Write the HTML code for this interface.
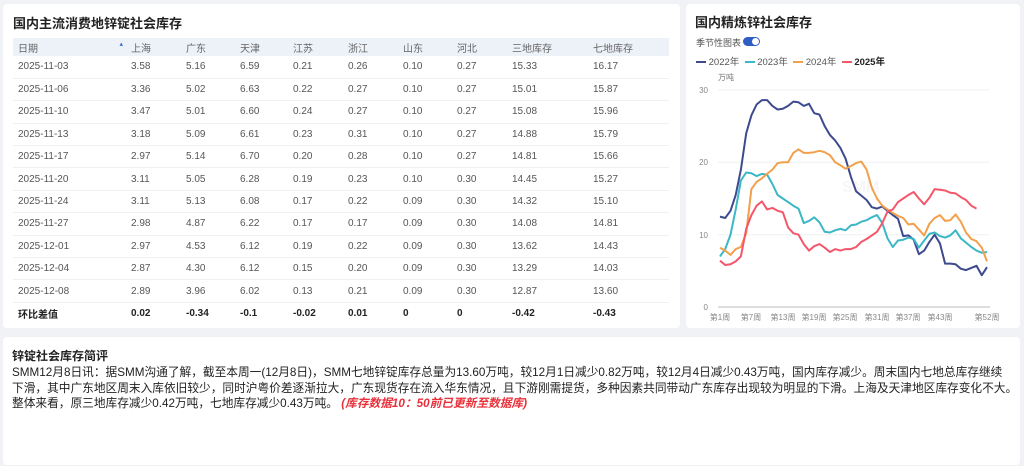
<!DOCTYPE html>
<html><head><meta charset="utf-8">
<style>
*{margin:0;padding:0;box-sizing:border-box}
body{width:1024px;height:466px;background:#f0f2f6;font-family:"Liberation Sans","Noto Sans CJK SC",sans-serif;color:#333;position:relative;overflow:hidden}
.card{position:absolute;background:#fff;border-radius:4px}
h3{font-size:13px;font-weight:bold;color:#222;position:absolute}
table{position:absolute;left:10px;top:34px;width:656px;border-collapse:collapse;font-size:10px;color:#555;table-layout:fixed}
td{height:22.4px;border-bottom:1px solid #eef0f3;padding:0;white-space:nowrap}
tr.hd td{background:#edf1f8;height:18px;border:none;color:#666}
tr.df td{font-weight:bold;color:#222;border:none}
.r{color:#e0102a}.g{color:#1a8a2a}
.txt{position:absolute;left:12px;top:365px;font-size:11.7px;line-height:15.5px;color:#222;white-space:nowrap}
</style></head><body>
<div class="card" style="left:3px;top:4px;width:677px;height:324px">
<h3 style="left:10px;top:9px">国内主流消费地锌锭社会库存</h3>
<table>
<colgroup><col style="width:118px"><col style="width:55px"><col style="width:54px"><col style="width:53px"><col style="width:55px"><col style="width:55px"><col style="width:54px"><col style="width:55px"><col style="width:81px"><col></colgroup>
<tr class="hd"><td style="padding-left:5px">日期<span style="float:right;color:#3a6fd8;font-size:7px;margin-right:8px">▴</span></td><td>上海</td><td>广东</td><td>天津</td><td>江苏</td><td>浙江</td><td>山东</td><td>河北</td><td>三地库存</td><td>七地库存</td></tr>
<tr><td style="padding-left:5px">2025-11-03</td><td>3.58</td><td>5.16</td><td>6.59</td><td>0.21</td><td>0.26</td><td>0.10</td><td>0.27</td><td>15.33</td><td>16.17</td></tr>
<tr><td style="padding-left:5px">2025-11-06</td><td>3.36</td><td>5.02</td><td>6.63</td><td>0.22</td><td>0.27</td><td>0.10</td><td>0.27</td><td>15.01</td><td>15.87</td></tr>
<tr><td style="padding-left:5px">2025-11-10</td><td>3.47</td><td>5.01</td><td>6.60</td><td>0.24</td><td>0.27</td><td>0.10</td><td>0.27</td><td>15.08</td><td>15.96</td></tr>
<tr><td style="padding-left:5px">2025-11-13</td><td>3.18</td><td>5.09</td><td>6.61</td><td>0.23</td><td>0.31</td><td>0.10</td><td>0.27</td><td>14.88</td><td>15.79</td></tr>
<tr><td style="padding-left:5px">2025-11-17</td><td>2.97</td><td>5.14</td><td>6.70</td><td>0.20</td><td>0.28</td><td>0.10</td><td>0.27</td><td>14.81</td><td>15.66</td></tr>
<tr><td style="padding-left:5px">2025-11-20</td><td>3.11</td><td>5.05</td><td>6.28</td><td>0.19</td><td>0.23</td><td>0.10</td><td>0.30</td><td>14.45</td><td>15.27</td></tr>
<tr><td style="padding-left:5px">2025-11-24</td><td>3.11</td><td>5.13</td><td>6.08</td><td>0.17</td><td>0.22</td><td>0.09</td><td>0.30</td><td>14.32</td><td>15.10</td></tr>
<tr><td style="padding-left:5px">2025-11-27</td><td>2.98</td><td>4.87</td><td>6.22</td><td>0.17</td><td>0.17</td><td>0.09</td><td>0.30</td><td>14.08</td><td>14.81</td></tr>
<tr><td style="padding-left:5px">2025-12-01</td><td>2.97</td><td>4.53</td><td>6.12</td><td>0.19</td><td>0.22</td><td>0.09</td><td>0.30</td><td>13.62</td><td>14.43</td></tr>
<tr><td style="padding-left:5px">2025-12-04</td><td>2.87</td><td>4.30</td><td>6.12</td><td>0.15</td><td>0.20</td><td>0.09</td><td>0.30</td><td>13.29</td><td>14.03</td></tr>
<tr><td style="padding-left:5px">2025-12-08</td><td>2.89</td><td>3.96</td><td>6.02</td><td>0.13</td><td>0.21</td><td>0.09</td><td>0.30</td><td>12.87</td><td>13.60</td></tr>
<tr class="df"><td style="padding-left:5px">环比差值</td><td class="r">0.02</td><td class="g">-0.34</td><td class="g">-0.1</td><td class="g">-0.02</td><td class="r">0.01</td><td>0</td><td>0</td><td class="g">-0.42</td><td class="g">-0.43</td></tr>
</table>
</div>
<div class="card" style="left:686px;top:4px;width:334px;height:324px">
<h3 style="left:9px;top:8px">国内精炼锌社会库存</h3>
<div style="position:absolute;left:10px;top:32px;font-size:9px;color:#555">季节性图表</div>
<div style="position:absolute;left:57px;top:33px;width:17px;height:9px;border-radius:5px;background:#2f5fc4"><div style="position:absolute;right:1px;top:1px;width:7px;height:7px;border-radius:50%;background:#fff"></div></div>
<div style="position:absolute;left:10px;top:50px;font-size:9.5px;color:#555;white-space:nowrap">
<span style="display:inline-block;width:10px;height:2px;background:#3e4a8e;vertical-align:middle"></span> 2022年&nbsp;&nbsp;<span style="display:inline-block;width:10px;height:2px;background:#3bb7c6;vertical-align:middle"></span> 2023年&nbsp;&nbsp;<span style="display:inline-block;width:10px;height:2px;background:#f2a04c;vertical-align:middle"></span> 2024年&nbsp;&nbsp;<span style="display:inline-block;width:10px;height:2px;background:#f4566a;vertical-align:middle"></span> <b style="color:#222">2025年</b></div>
</div>
<svg id="ch" style="position:absolute;left:0;top:0" width="1024" height="330" font-family="Liberation Sans, Noto Sans CJK SC, sans-serif" font-size="8" fill="#888">
<text x="718" y="80" fill="#777">万吨</text>
<line x1="718" y1="90" x2="990" y2="90" stroke="#eef0f4"/>
<line x1="718" y1="162.3" x2="990" y2="162.3" stroke="#eef0f4"/>
<line x1="718" y1="234.7" x2="990" y2="234.7" stroke="#eef0f4"/>
<line x1="718" y1="307" x2="990" y2="307" stroke="#bbb"/>
<text x="708" y="93" text-anchor="end">30</text>
<text x="708" y="165" text-anchor="end">20</text>
<text x="708" y="238" text-anchor="end">10</text>
<text x="708" y="310" text-anchor="end">0</text>
<text x="720" y="320" text-anchor="middle">第1周</text>
<text x="751" y="320" text-anchor="middle">第7周</text>
<text x="783" y="320" text-anchor="middle">第13周</text>
<text x="814" y="320" text-anchor="middle">第19周</text>
<text x="845" y="320" text-anchor="middle">第25周</text>
<text x="877" y="320" text-anchor="middle">第31周</text>
<text x="908" y="320" text-anchor="middle">第37周</text>
<text x="940" y="320" text-anchor="middle">第43周</text>
<text x="987" y="320" text-anchor="middle">第52周</text>
<text x="842" y="192" font-size="16" font-weight="bold" fill="#f5f6f8">SMM</text>
</svg>
<div class="card" style="left:3px;top:337px;width:1017px;height:128px">
<h3 style="left:9px;top:10px;font-size:12px">锌锭社会库存简评</h3>
</div>
<div class="txt">SMM12月8日讯：据SMM沟通了解，截至本周一(12月8日)，SMM七地锌锭库存总量为13.60万吨，较12月1日减少0.82万吨，较12月4日减少0.43万吨，国内库存减少。周末国内七地总库存继续<br>下滑，其中广东地区周末入库依旧较少，同时沪粤价差逐渐拉大，广东现货存在流入华东情况，且下游刚需提货，多种因素共同带动广东库存出现较为明显的下滑。上海及天津地区库存变化不大。<br>整体来看，原三地库存减少0.42万吨，七地库存减少0.43万吨。 <i style="color:#e8303a;font-weight:bold">(库存数据10：50前已更新至数据库)</i></div>
<script>
var S=[["#3e4a8e",[12.5,12.3,13.3,15.5,19,24,26.5,28,28.6,28.6,27.8,27.3,27.4,27.8,28.4,28.3,27.8,28.1,26.8,26.6,25,23.8,23,22,20.5,18,16,15.4,14.8,13.8,13.6,13.9,13.3,12.7,12.2,9.8,9.9,9.3,7.3,7.8,9,10,8.8,6,6,5.9,5.3,5.1,5.4,5.7,4.4,5.5]],
["#3bb7c6",[7,8,10,13.5,17.5,18.6,18.5,18.1,18.4,18.3,17,15.5,15,14.5,14,13.6,11.6,11.9,12.4,11.7,10.4,10.3,10.6,10.8,10.6,11.3,11.4,11.8,12,12.4,12.7,11.6,9.5,8.3,9.2,9.3,9.6,9.4,8.2,9.2,10.1,10.3,9.8,9.6,9.9,10.6,9.5,8.9,8.3,7.8,7.5,7.6]],
["#f2a04c",[8.2,7.8,7.2,8,8.3,10.2,16.3,17.3,17.8,18.4,19,19.9,20,20,21.3,21.8,21.3,21.3,21.4,21.6,21.4,21,20,19.6,19.1,19.5,19.9,20.1,19,16.5,15,14,13.5,13,12.6,12.3,11.4,11.5,10.7,9.9,11.5,12.3,12.7,11.9,12,12.8,11.8,10.3,9.4,9.1,8.2,6.3]],
["#f4566a",[6.4,5.8,5.9,6.3,7,10.8,12.7,14,14.6,13.5,13.7,13.3,13.1,11,10.2,10,8.7,7.8,8.4,8.7,8.2,7.6,8,7.8,8,8,8.3,9,9.4,9.9,10.4,11.6,13.2,13.5,14.5,15,15.5,15.9,15,14.2,15.1,16.3,16.2,16.1,15.8,15.7,15.2,14.8,14,13.6]]];
var svg=document.getElementById("ch"),h="";
S.forEach(function(s){var p=s[1].map(function(v,i){return (720+i*5.235).toFixed(1)+","+(307-v*7.233).toFixed(1)}).join(" ");
h+='<polyline fill="none" stroke="'+s[0]+'" stroke-width="2" stroke-linejoin="round" points="'+p+'"/>';});
svg.insertAdjacentHTML("beforeend",h);
</script>
</body></html>
